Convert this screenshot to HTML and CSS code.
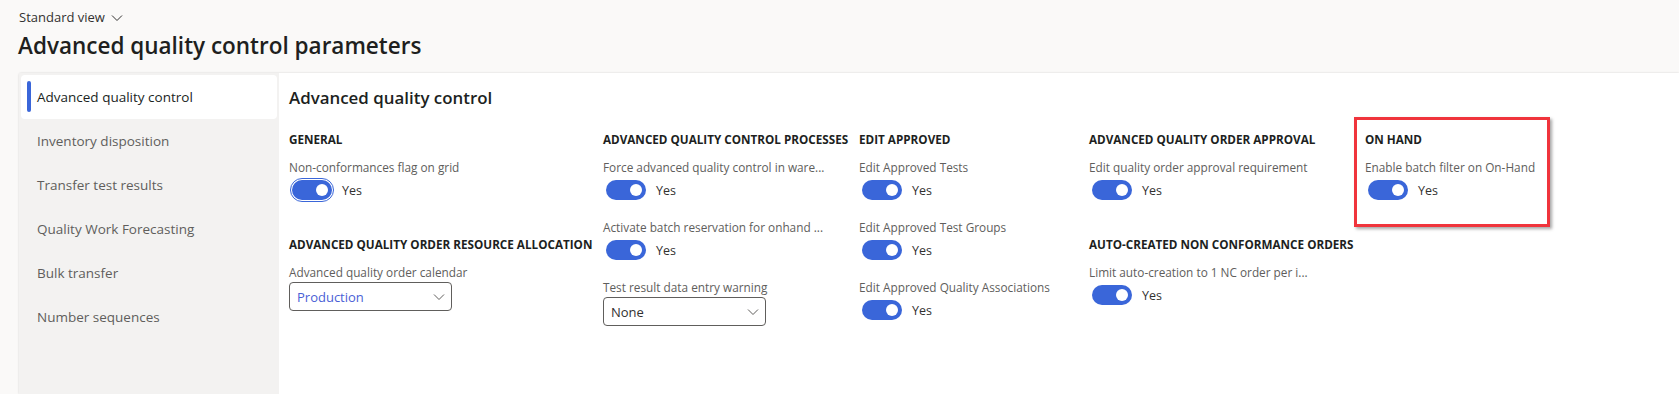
FILE: index.html
```html
<!DOCTYPE html>
<html lang="en">
  <head>
    <meta charset="UTF-8" />
    <meta name="viewport" content="width=device-width, initial-scale=1.0" />
    <title>Advanced quality control parameters</title>
    <link rel="stylesheet" href="styles.css">
  </head>
  <body>
    <div class="page">
      <div class="view-picker">
        <span>Standard view</span>
        <svg class="view-chevron" width="12" height="8" viewBox="0 0 12 8">
          <path d="M1 1.5 L6 6.5 L11 1.5" fill="none" stroke="#323130" stroke-width="1" />
        </svg>
      </div>
      <h1 class="page-title">Advanced quality control parameters</h1>

      <div class="panel">
        <nav class="tabs">
          <div class="tab active">Advanced quality control</div>
          <div class="tab">Inventory disposition</div>
          <div class="tab">Transfer test results</div>
          <div class="tab">Quality Work Forecasting</div>
          <div class="tab">Bulk transfer</div>
          <div class="tab">Number sequences</div>
        </nav>

        <main class="content">
          <h2 class="content-title">Advanced quality control</h2>

          <div class="columns">
            <div class="column col-1">
              <section class="group">
                <h3 class="group-title">GENERAL</h3>
                <div class="field">
                  <label class="field-label">Non-conformances flag on grid</label>
                  <div class="toggle-row">
                    <span class="toggle focused"><span class="knob"></span></span>
                    <span class="toggle-text">Yes</span>
                  </div>
                </div>
              </section>
              <section class="group">
                <h3 class="group-title">ADVANCED QUALITY ORDER RESOURCE ALLOCATION</h3>
                <div class="field">
                  <label class="field-label">Advanced quality order calendar</label>
                  <div class="select">
                    <span class="select-value link">Production</span>
                    <svg width="12" height="8" viewBox="0 0 12 8">
                      <path d="M1 1.5 L6 6.5 L11 1.5" fill="none" stroke="#605e5c" stroke-width="1" />
                    </svg>
                  </div>
                </div>
              </section>
            </div>

            <div class="column col-2">
              <section class="group">
                <h3 class="group-title">ADVANCED QUALITY CONTROL PROCESSES</h3>
                <div class="field">
                  <label class="field-label">Force advanced quality control in ware...</label>
                  <div class="toggle-row">
                    <span class="toggle"><span class="knob"></span></span>
                    <span class="toggle-text">Yes</span>
                  </div>
                </div>
                <div class="field">
                  <label class="field-label">Activate batch reservation for onhand ...</label>
                  <div class="toggle-row">
                    <span class="toggle"><span class="knob"></span></span>
                    <span class="toggle-text">Yes</span>
                  </div>
                </div>
                <div class="field">
                  <label class="field-label">Test result data entry warning</label>
                  <div class="select">
                    <span class="select-value">None</span>
                    <svg width="12" height="8" viewBox="0 0 12 8">
                      <path d="M1 1.5 L6 6.5 L11 1.5" fill="none" stroke="#605e5c" stroke-width="1" />
                    </svg>
                  </div>
                </div>
              </section>
            </div>

            <div class="column col-3">
              <section class="group">
                <h3 class="group-title">EDIT APPROVED</h3>
                <div class="field">
                  <label class="field-label">Edit Approved Tests</label>
                  <div class="toggle-row">
                    <span class="toggle"><span class="knob"></span></span>
                    <span class="toggle-text">Yes</span>
                  </div>
                </div>
                <div class="field">
                  <label class="field-label">Edit Approved Test Groups</label>
                  <div class="toggle-row">
                    <span class="toggle"><span class="knob"></span></span>
                    <span class="toggle-text">Yes</span>
                  </div>
                </div>
                <div class="field">
                  <label class="field-label">Edit Approved Quality Associations</label>
                  <div class="toggle-row">
                    <span class="toggle"><span class="knob"></span></span>
                    <span class="toggle-text">Yes</span>
                  </div>
                </div>
              </section>
            </div>

            <div class="column col-4">
              <section class="group">
                <h3 class="group-title">ADVANCED QUALITY ORDER APPROVAL</h3>
                <div class="field">
                  <label class="field-label">Edit quality order approval requirement</label>
                  <div class="toggle-row">
                    <span class="toggle"><span class="knob"></span></span>
                    <span class="toggle-text">Yes</span>
                  </div>
                </div>
              </section>
              <section class="group">
                <h3 class="group-title">AUTO-CREATED NON CONFORMANCE ORDERS</h3>
                <div class="field">
                  <label class="field-label">Limit auto-creation to 1 NC order per i...</label>
                  <div class="toggle-row">
                    <span class="toggle"><span class="knob"></span></span>
                    <span class="toggle-text">Yes</span>
                  </div>
                </div>
              </section>
            </div>

            <div class="column col-5">
              <section class="group highlight">
                <h3 class="group-title">ON HAND</h3>
                <div class="field">
                  <label class="field-label">Enable batch filter on On-Hand</label>
                  <div class="toggle-row">
                    <span class="toggle"><span class="knob"></span></span>
                    <span class="toggle-text">Yes</span>
                  </div>
                </div>
              </section>
            </div>
          </div>
        </main>
      </div>
    </div>
  </body>
</html>
```

FILE: styles.css
```css
html,
body {
  margin: 0;
  padding: 0;
  height: 100%;
}
body {
  font-family: "Segoe UI", "Open Sans", sans-serif;
  background-color: #faf9f8;
  color: #323130;
  overflow: hidden;
}
.page {
  display: flex;
  flex-direction: column;
  height: 100vh;
}
.view-picker {
  display: flex;
  align-items: center;
  gap: 6px;
  margin: 8px 0 0 19px;
  height: 18px;
  font-size: 13px;
  color: #323130;
}
.view-chevron {
  margin-top: 1px;
}
.page-title {
  margin: 4px 0 0 18px;
  font-size: 22.5px;
  line-height: 32px;
  font-weight: 600;
  color: #201f1e;
}
.panel {
  flex: 1;
  display: flex;
  margin: 11px 0 0 19px;
  background-color: #ffffff;
  border-radius: 2px 0 0 0;
  box-shadow: 0 0 2px rgba(0, 0, 0, 0.18);
}
.tabs {
  width: 256px;
  flex-shrink: 0;
  padding: 2px;
  background-color: #f3f2f1;
}
.tab {
  position: relative;
  height: 44px;
  line-height: 44px;
  padding-left: 16px;
  font-size: 13.5px;
  color: #605e5c;
}
.tab.active {
  background-color: #ffffff;
  border-radius: 4px;
  color: #201f1e;
}
.tab.active::before {
  content: "";
  position: absolute;
  left: 6px;
  top: 6px;
  width: 4px;
  height: 31px;
  border-radius: 2px;
  background-color: #3a66d9;
}
.content {
  flex: 1;
  padding: 13px 0 0 10px;
}
.content-title {
  margin: 0;
  font-size: 16.9px;
  line-height: 24px;
  font-weight: 600;
  color: #201f1e;
}
.columns {
  display: grid;
  grid-template-columns: 314px 256px 230px 276px 1fr;
  margin-top: 19px;
}
.group {
  padding-bottom: 17px;
}
.group-title {
  margin: 0 0 8px 0;
  font-size: 11.7px;
  line-height: 20px;
  font-weight: 700;
  color: #201f1e;
  white-space: nowrap;
}
.field {
  margin-bottom: 14px;
}
.field-label {
  display: block;
  font-size: 11.8px;
  line-height: 20px;
  color: #605e5c;
  white-space: nowrap;
}
.toggle-row {
  display: flex;
  align-items: center;
  height: 26px;
  padding-left: 3px;
}
.toggle {
  position: relative;
  width: 40px;
  height: 20px;
  border-radius: 10px;
  background-color: #3a66d9;
}
.toggle.focused {
  outline: 1px solid #3a66d9;
  outline-offset: 1px;
}
.knob {
  position: absolute;
  right: 4px;
  top: 4px;
  width: 12px;
  height: 12px;
  border-radius: 50%;
  background-color: #ffffff;
}
.toggle-text {
  margin-left: 10px;
  font-size: 12.5px;
  color: #323130;
}
.select {
  display: flex;
  align-items: center;
  justify-content: space-between;
  box-sizing: border-box;
  width: 163px;
  height: 29px;
  padding: 0 6px 0 7px;
  border: 1px solid #605e5c;
  border-radius: 4px;
  font-size: 13px;
}
.select-value {
  color: #323130;
}
.select-value.link {
  color: #4a5fd6;
}
.highlight {
  position: relative;
}
.highlight::after {
  content: "";
  position: absolute;
  left: -11px;
  top: -12px;
  width: 196px;
  height: 110px;
  box-sizing: border-box;
  border: 3px solid #f0343c;
  box-shadow: 2px 2px 3px rgba(0, 0, 0, 0.35);
}
```
